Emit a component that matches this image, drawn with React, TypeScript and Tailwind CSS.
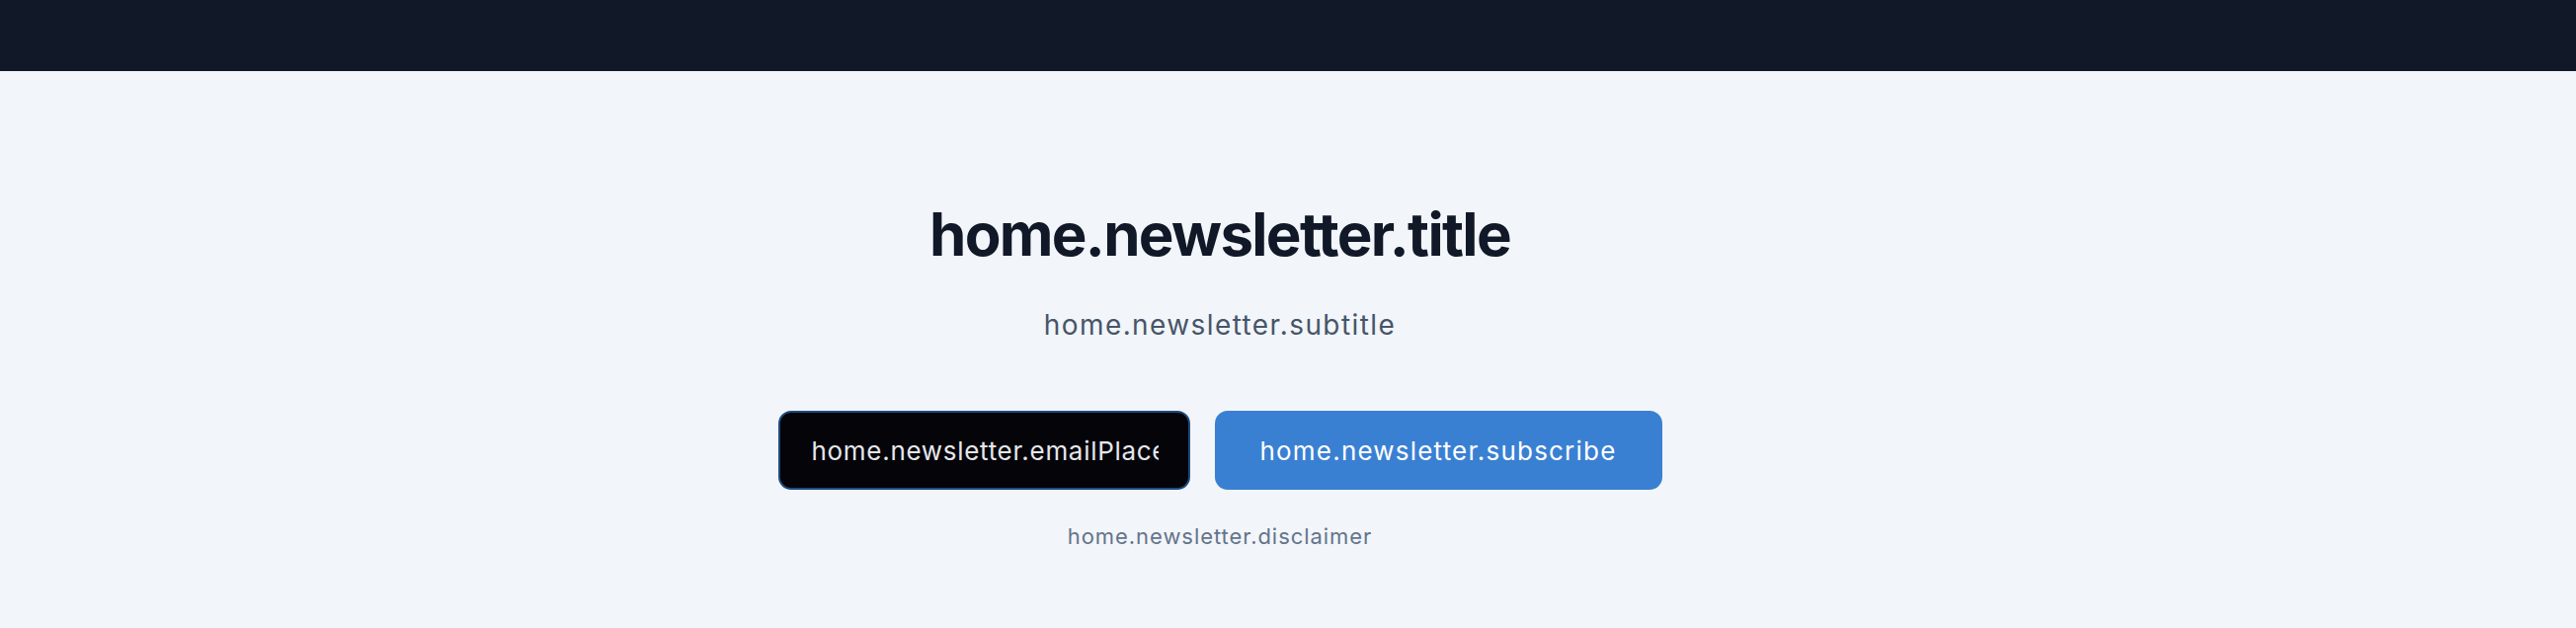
import React from 'react';

export default function App() {
  return (
    <div className="min-h-screen bg-[#f2f5f9] font-['Inter',sans-serif]">
      <header className="h-[72px] bg-[#111827]" />

      <section className="w-[2470px] pt-[129px] pb-12">
        <div className="flex flex-col items-center">
          <h2 className="text-[60px] leading-[72px] font-bold tracking-[-1.7px] text-[#111827]">home.newsletter.title</h2>
          <p className="mt-[38px] text-[28px] leading-[36px] tracking-[1.4px] text-[#475569]">home.newsletter.subtitle</p>

          <form className="mt-[69px] flex items-center gap-[25px]" onSubmit={(e) => e.preventDefault()}>
            <input
              type="email"
              placeholder="home.newsletter.emailPlaceholder"
              className="w-[417px] h-[80px] rounded-[13px] border-2 border-[#1e4a7e] bg-[#040409] pl-[32px] pr-[30px] text-[26px] tracking-[0.7px] text-white placeholder:text-[#e5e7eb] outline-none"
            />
            <button
              type="submit"
              className="w-[453px] h-[80px] rounded-[13px] bg-[#3a80d2] text-[26px] tracking-[1.2px] text-white"
            >
              home.newsletter.subscribe
            </button>
          </form>

          <p className="mt-[32px] text-[22px] leading-[30px] tracking-[0.95px] text-[#64748b]">home.newsletter.disclaimer</p>
        </div>
      </section>
    </div>
  );
}
